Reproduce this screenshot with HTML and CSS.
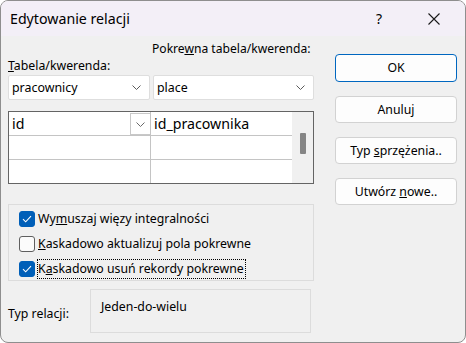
FILE: index.html
```html
<!DOCTYPE html>
<html lang="pl">
<head>
<meta charset="utf-8">
<title>Edytowanie relacji</title>
<link rel="stylesheet" href="styles.css">
</head>
<body>
<div class="window">
  <div class="titlebar">
    <span class="title">Edytowanie relacji</span>
    <span class="help">?</span>
    <span class="close">
      <svg width="12" height="12" viewBox="0 0 12 12"><path d="M0.5 0.5 L11.5 11.5 M11.5 0.5 L0.5 11.5" stroke="#1a1a1a" stroke-width="1.1" fill="none"/></svg>
    </span>
  </div>
  <div class="content">
    <div class="main">
      <div class="label related">Pokre<u>w</u>na tabela/kwerenda:</div>
      <div class="label"><u>T</u>abela/kwerenda:</div>
      <div class="combos">
        <div class="combo c1"><span>pracownicy</span><svg class="chev" width="9" height="5" viewBox="0 0 9 5"><path d="M0.5 0.5 L4.5 4.5 L8.5 0.5" stroke="#5a5a5a" stroke-width="1" fill="none"/></svg></div>
        <div class="combo c2"><span>place</span><svg class="chev" width="9" height="5" viewBox="0 0 9 5"><path d="M0.5 0.5 L4.5 4.5 L8.5 0.5" stroke="#5a5a5a" stroke-width="1" fill="none"/></svg></div>
      </div>
      <div class="grid">
        <div class="cells">
          <div class="row">
            <div class="cell first"><span>id</span><span class="ddbtn"><svg width="9" height="5" viewBox="0 0 9 5"><path d="M0.5 0.5 L4.5 4.5 L8.5 0.5" stroke="#6a6a6a" stroke-width="1" fill="none"/></svg></span></div>
            <div class="cell"><span>id_pracownika</span></div>
          </div>
          <div class="row"><div class="cell first"></div><div class="cell"></div></div>
          <div class="row"><div class="cell first"></div><div class="cell"></div></div>
          <div class="row"><div class="cell first"></div><div class="cell"></div></div>
        </div>
        <div class="scroll"><div class="thumb"></div></div>
      </div>
      <div class="group">
        <div class="check-row"><span class="box on"><svg width="10" height="8" viewBox="0 0 10 8"><path d="M1 4.2 L3.7 6.8 L9 1.2" stroke="#fff" stroke-width="1.1" fill="none"/></svg></span><span class="ctext">Wy<u>m</u>uszaj więzy integralności</span></div>
        <div class="check-row"><span class="box"></span><span class="ctext"><u>K</u>askadowo aktualizuj pola pokrewne</span></div>
        <div class="check-row"><span class="box on"><svg width="10" height="8" viewBox="0 0 10 8"><path d="M1 4.2 L3.7 6.8 L9 1.2" stroke="#fff" stroke-width="1.1" fill="none"/></svg></span><span class="ctext focus">K<u>a</u>skadowo usuń rekordy pokrewne</span></div>
      </div>
      <div class="reltype">
        <span class="rlabel">Typ relacji:</span>
        <div class="rbox">Jeden-do-wielu</div>
      </div>
    </div>
    <div class="buttons">
      <div class="btn default"><span>OK</span></div>
      <div class="btn"><span>Anuluj</span></div>
      <div class="btn"><span>Typ <u>s</u>przężenia..</span></div>
      <div class="btn"><span>Utwórz <u>n</u>owe..</span></div>
    </div>
  </div>
</div>
</body>
</html>
```

FILE: styles.css
```css
html, body {
  margin: 0;
  padding: 0;
  background: #ffffff;
}
body {
  font-family: "Noto Sans", "Liberation Sans", sans-serif;
  color: #000;
}
.window {
  width: 466px;
  height: 343px;
  box-sizing: border-box;
  border: 1px solid #8e8e8e;
  border-radius: 8px;
  background: #f0f0f0;
  overflow: hidden;
}
.titlebar {
  height: 35px;
  background: #f3eff7;
  display: flex;
  align-items: center;
  padding-left: 9px;
}
.title {
  font-size: 14.2px;
  flex: 1;
  padding-bottom: 1px;
}
.help {
  font-size: 14px;
  margin-right: 46px;
  padding-bottom: 1px;
}
.close {
  display: flex;
  margin-right: 25px;
}
.content {
  display: flex;
  padding-left: 7px;
}
.main {
  width: 306px;
  display: flex;
  flex-direction: column;
  font-size: 12.3px;
}
.label {
  line-height: 17px;
  height: 17px;
  white-space: nowrap;
}
.related {
  margin-top: 4px;
  padding-left: 144px;
  font-size: 12.1px;
}
.combos {
  display: flex;
  gap: 3px;
  margin-top: 1px;
}
.combo {
  height: 25px;
  box-sizing: border-box;
  background: #fff;
  border: 1px solid #dedede;
  border-radius: 2px;
  display: flex;
  align-items: center;
  justify-content: space-between;
  padding: 0 8px 0 3px;
  font-size: 12.4px;
}
.combo span {
  padding-bottom: 1px;
}
.c1 { width: 142px; }
.c2 { width: 161px; }
.grid {
  margin-top: 11px;
  height: 73px;
  box-sizing: border-box;
  border: 1px solid #646464;
  display: flex;
  overflow: hidden;
}
.cells {
  width: 283px;
  background: #fff;
}
.row {
  display: flex;
  height: 23px;
  border-bottom: 1px solid #c4c4c4;
}
.cell {
  height: 23px;
  display: flex;
  align-items: center;
  font-size: 14.2px;
  padding-left: 3px;
  box-sizing: border-box;
  flex: 1;
}
.cell.first {
  width: 142px;
  flex: none;
  border-right: 1px solid #c4c4c4;
  justify-content: space-between;
  padding-right: 0;
}
.cell span {
  padding-bottom: 1px;
}
.ddbtn {
  width: 20px;
  height: 22px;
  box-sizing: border-box;
  border: 1px solid #c8c8c8;
  border-right: none;
  display: flex;
  align-items: center;
  justify-content: center;
  background: #fff;
  padding: 0 !important;
  margin-top: 1px;
}
.scroll {
  flex: 1;
  background: #f0f0f0;
  display: flex;
  justify-content: center;
}
.thumb {
  width: 6px;
  height: 21px;
  margin-top: 21px;
  background: #858585;
  border-radius: 1px;
}
.group {
  margin-top: 20px;
  border: 1px solid #dcdcdc;
  padding: 1px 0 0 10px;
  height: 77px;
  box-sizing: border-box;
}
.check-row {
  height: 25px;
  display: flex;
  align-items: center;
  font-size: 12.3px;
}
.box {
  width: 16px;
  height: 16px;
  box-sizing: border-box;
  border: 1px solid #5f5f5f;
  border-radius: 3px;
  background: #fbfbfb;
  display: flex;
  align-items: center;
  justify-content: center;
  margin-right: 3px;
}
.box.on {
  background: #005fb8;
  border-color: #005fb8;
}
.ctext {
  padding: 0 1px 1px 0;
  line-height: 17px;
  white-space: nowrap;
}
.ctext.focus {
  outline: 1px dotted #000;
  outline-offset: 0;
}
.reltype {
  display: flex;
  align-items: center;
  margin-top: 8px;
}
.rlabel {
  width: 82px;
  font-size: 12.3px;
  padding-top: 4px;
}
.rbox {
  width: 221px;
  height: 44px;
  box-sizing: border-box;
  border: 1px solid #dcdcdc;
  padding: 8px 0 0 10px;
  font-size: 12.3px;
}
.buttons {
  margin-left: 21px;
  width: 122px;
  display: flex;
  flex-direction: column;
  gap: 14px;
  padding-top: 18px;
}
.btn {
  height: 27px;
  box-sizing: border-box;
  background: #fdfdfd;
  border: 1px solid #d2d2d2;
  border-radius: 4px;
  display: flex;
  align-items: center;
  justify-content: center;
  font-size: 12.3px;
  padding-bottom: 1px;
  white-space: nowrap;
}
.btn.default {
  height: 28px;
  border-color: #0067c0;
}
```
